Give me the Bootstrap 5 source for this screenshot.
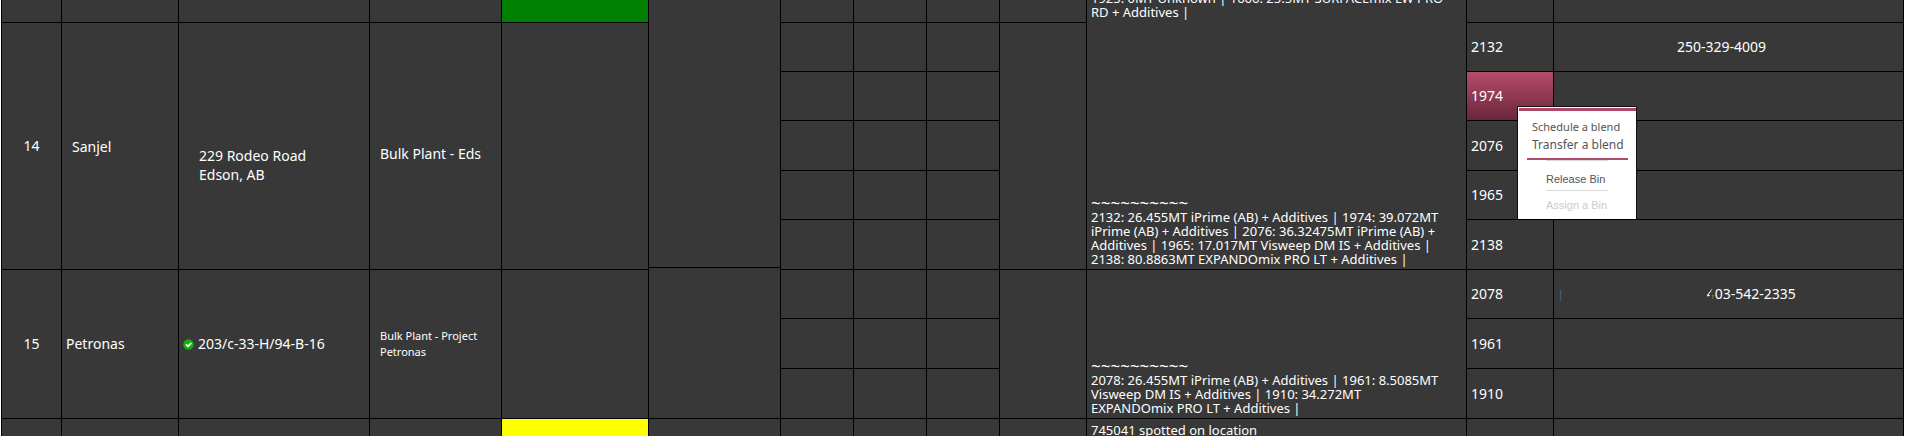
<!DOCTYPE html>
<html lang="en">
<head>
<meta charset="utf-8">
<meta name="viewport" content="width=device-width, initial-scale=1">
<title>Bin schedule</title>
<link href="https://cdn.jsdelivr.net/npm/bootstrap@5.3.0/dist/css/bootstrap.min.css" rel="stylesheet">
<style>
  body { font-family: "Noto Sans", "Open Sans", sans-serif; font-size: 13px; line-height: 14px; background: #fff; }
  .board { table-layout: fixed; border-collapse: separate; border-spacing: 0; background: #383838; color: #fff; border-left: 1px solid #000; }
  .board td { padding: 0 4px; height: 49px; vertical-align: middle; border: solid #000; border-width: 0 1px 1px 0; }
  .board .edge td { height: 23px; }
  .board .tall td { height: 50px; }
  .c-no { width: 60px; } .c-client { width: 117px; } .c-place { width: 191px; } .c-job { width: 132px; }
  .c-status { width: 147px; } .c-crew { width: 132px; } .c-slot { width: 73px; } .c-gap { width: 87px; }
  .c-notes { width: 380px; } .c-bin { width: 87px; }
  .done { background: #008000; } .pending { background: #ff0; }
  .board td.open-end { border-bottom-width: 0; }
  .board td.notes { vertical-align: bottom; padding-bottom: 3px; white-space: nowrap; }
  .cut { height: 20px; padding-bottom: 1px; }
  .wave { font-size: 17px; line-height: 14px; }
  .strip { height: 3px; border-top: 1px solid #000; margin: 0 -4px; }
  .figure-text { font-size: 14px; }
  .roomy { font-size: 14px; line-height: 19px; }
  .compact { font-size: 11px; line-height: 16px; }
  .board td.place { padding: 38px 0 0 20px; }
  .board td.inset { padding-left: 10px; }
  .board td.lowered { padding-top: 14px; }
  .board td.selected { background: linear-gradient(#b54c6b, #6b263c); position: relative; }
  .board td.bin { font-size: 14px; }
  .board td.count { padding: 0 0 4px 24px; }
  .blend-menu { position: absolute; z-index: 5; top: 34px; left: 50px; width: 120px; height: 113px; background: #fff; border: solid #111; border-width: 1px 1px 0 1px; padding: 1px 0 0 1px; }
  .blend-menu .bar { height: 3px; background: #ae4a68; }
  .blend-menu .rule { height: 2px; background: #ae4a68; margin: 4px 8px 0; }
  .blend-menu button { display: block; border: 0; padding: 0; background: none; color: #555; white-space: nowrap; text-align: left; margin-left: 13px; }
  .blend-menu .first { font-size: 11px; line-height: 18px; margin-top: 7px; }
  .blend-menu .second { font-size: 12px; line-height: 18px; }
  .blend-menu .minor { font: 11px/16px "Liberation Sans", sans-serif; margin-left: 27px; }
  .blend-menu .release { margin-top: 10px; }
  .blend-menu .hair { height: 1px; background: #d8d8d8; margin: 3px 0 6px 27px; width: 62px; }
  .blend-menu .hair.upper { margin: 0 0 0 27px; }
  .blend-menu .minor:disabled { color: #ccc; }
  .tick { color: #357a94; font-size: 10px; }
  .worn { color: transparent; background: linear-gradient(110deg, #fff 40%, #383838 52%, #383838 62%, #77673f 64%); -webkit-background-clip: text; background-clip: text; }
  .phone-late { padding-left: 40px; }
  .board td.phone { padding-right: 18px; }
</style>
</head>
<body>
<main class="vh-100 overflow-hidden">
<div style="padding:0 1px">
<table class="board w-100">
  <colgroup>
    <col class="c-no"><col class="c-client"><col class="c-place"><col class="c-job"><col class="c-status"><col class="c-crew">
    <col class="c-slot"><col class="c-slot"><col class="c-slot"><col class="c-gap"><col class="c-notes"><col class="c-bin"><col>
  </colgroup>
  <tbody>
  <tr class="edge">
    <td></td><td></td><td></td><td></td><td class="done"></td><td class="open-end"></td><td></td><td></td><td></td><td></td>
    <td class="notes open-end"><div class="cut overflow-hidden d-flex align-items-end"><div>1925: 0MT Unknown | 1666: 25.5MT SURFACEmix LW PRO<br>RD + Additives |</div></div></td>
    <td></td><td></td>
  </tr>
  <tr>
    <td rowspan="5" class="text-center figure-text">14</td>
    <td rowspan="5" class="inset roomy">Sanjel</td>
    <td rowspan="5" class="place roomy">229 Rodeo Road<br>Edson, AB</td>
    <td rowspan="5" class="inset lowered roomy">Bulk Plant - Eds</td>
    <td rowspan="5"></td>
    <td rowspan="5" class="open-end align-bottom"><div class="strip"></div></td>
    <td></td><td></td><td></td>
    <td rowspan="5"></td>
    <td rowspan="5" class="notes"><div class="wave">~~~~~~~~~~</div>2132: 26.455MT iPrime (AB) + Additives | 1974: 39.072MT<br>iPrime (AB) + Additives | 2076: 36.32475MT iPrime (AB) +<br>Additives | 1965: 17.017MT Visweep DM IS + Additives |<br>2138: 80.8863MT EXPANDOmix PRO LT + Additives |</td>
    <td class="bin">2132</td>
    <td class="text-center figure-text phone">250-329-4009</td>
  </tr>
  <tr>
    <td></td><td></td><td></td>
    <td class="bin selected">1974
      <div class="blend-menu" role="menu">
        <div class="bar"></div>
        <button type="button" class="first" role="menuitem">Schedule a blend</button>
        <button type="button" class="second" role="menuitem">Transfer a blend</button>
        <div class="rule"></div>
        <div class="hair upper"></div>
        <button type="button" class="minor release" role="menuitem">Release Bin</button>
        <div class="hair"></div>
        <button type="button" class="minor" role="menuitem" disabled>Assign a Bin</button>
      </div>
    </td>
    <td></td>
  </tr>
  <tr class="tall"><td></td><td></td><td></td><td class="bin">2076</td><td></td></tr>
  <tr><td></td><td></td><td></td><td class="bin">1965</td><td></td></tr>
  <tr class="tall"><td></td><td></td><td></td><td class="bin">2138</td><td></td></tr>
  <tr>
    <td rowspan="3" class="text-center figure-text">15</td>
    <td rowspan="3" class="figure-text">Petronas</td>
    <td rowspan="3" class="figure-text"><div class="d-flex align-items-center gap-1"><svg width="11" height="11" viewBox="0 0 11 11" aria-hidden="true"><circle cx="5.5" cy="5.5" r="5.2" fill="#0eb30e"/><path d="M3 5.3l2 2 3.4-3.5" fill="none" stroke="#fff" stroke-width="1.7"/></svg>203/c-33-H/94-B-16</div></td>
    <td rowspan="3" class="inset compact">Bulk Plant - Project<br>Petronas</td>
    <td rowspan="3"></td><td rowspan="3"></td>
    <td></td><td></td><td></td>
    <td rowspan="3"></td>
    <td rowspan="3" class="notes"><div class="wave">~~~~~~~~~~</div>2078: 26.455MT iPrime (AB) + Additives | 1961: 8.5085MT<br>Visweep DM IS + Additives | 1910: 34.272MT<br>EXPANDOmix PRO LT + Additives |</td>
    <td class="bin">2078</td>
    <td class="figure-text"><div class="d-flex align-items-center"><span class="tick">|</span><span class="flex-fill text-center phone-late"><span class="worn">4</span>03-542-2335</span></div></td>
  </tr>
  <tr class="tall"><td></td><td></td><td></td><td class="bin">1961</td><td></td></tr>
  <tr class="tall"><td></td><td></td><td></td><td class="bin">1910</td><td></td></tr>
  <tr>
    <td></td><td></td><td></td><td></td><td class="pending"></td><td></td><td class="count figure-text">0</td><td></td><td></td><td></td>
    <td class="align-top pt-1">745041 spotted on location</td><td></td><td></td>
  </tr>
  </tbody>
</table>
</div>
</main>
<script src="https://cdn.jsdelivr.net/npm/bootstrap@5.3.0/dist/js/bootstrap.bundle.min.js"></script>
</body>
</html>
